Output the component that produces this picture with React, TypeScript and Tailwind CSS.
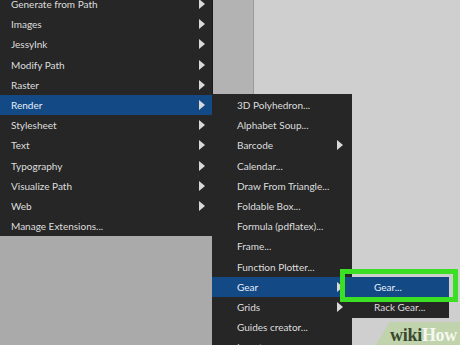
const mainItems = [
  { label: "Generate from Path", sub: true },
  { label: "Images", sub: true },
  { label: "JessyInk", sub: true },
  { label: "Modify Path", sub: true },
  { label: "Raster", sub: true },
  { label: "Render", sub: true, active: true },
  { label: "Stylesheet", sub: true },
  { label: "Text", sub: true },
  { label: "Typography", sub: true },
  { label: "Visualize Path", sub: true },
  { label: "Web", sub: true },
  { label: "Manage Extensions...", sub: false },
];

const renderItems = [
  { label: "3D Polyhedron..." },
  { label: "Alphabet Soup..." },
  { label: "Barcode", sub: true },
  { label: "Calendar..." },
  { label: "Draw From Triangle..." },
  { label: "Foldable Box..." },
  { label: "Formula (pdflatex)..." },
  { label: "Frame..." },
  { label: "Function Plotter..." },
  { label: "Gear", sub: true, active: true },
  { label: "Grids", sub: true },
  { label: "Guides creator..." },
  { label: "L-system..." },
];

function Arrow() {
  return (
    <svg width="6" height="10" viewBox="0 0 6 10" className="shrink-0">
      <path d="M0 0 L6 5 L0 10 Z" fill="#d9d9d9" />
    </svg>
  );
}

type Item = { label: string; sub?: boolean; active?: boolean };

function MenuRow({ item, pl, pr }: { item: Item; pl: string; pr: string }) {
  return (
    <div
      className={`flex h-[20.2px] items-center justify-between ${pl} ${pr} ${
        item.active ? "bg-[#134a86] text-[#e6eefa]" : "text-[#dedede]"
      }`}
    >
      <span className="whitespace-nowrap">{item.label}</span>
      {item.sub && <Arrow />}
    </div>
  );
}

export default function App() {
  return (
    <div
      className="relative h-[345px] w-[460px] overflow-hidden text-[10px] leading-none"
      style={{ fontFamily: 'Lato, "Open Sans", sans-serif' }}
    >
      {/* canvas behind the menus */}
      <div className="flex h-full">
        <div className="w-[213px] bg-[#aaaaaa]" />
        <div className="w-[41px] border-r border-[#9a9a9a] bg-[#b3b3b3]" />
        <div className="flex-1 bg-[#cfcfcf]" />
      </div>

      {/* Extensions menu */}
      <div className="absolute left-0 top-[-6px] w-[213px] border-r border-[#1a1a1a] bg-[#262626]">
        {mainItems.map((it) => (
          <MenuRow key={it.label} item={it} pl="pl-[11px]" pr="pr-[7px]" />
        ))}
      </div>

      {/* Render submenu */}
      <div className="absolute left-[212px] top-[94px] w-[140px] bg-[#262626] pt-[1px]">
        {renderItems.map((it) => (
          <MenuRow key={it.label} item={it} pl="pl-[25px]" pr="pr-[9px]" />
        ))}
      </div>

      {/* Gear submenu */}
      <div className="absolute left-[348px] top-[277px] w-[101px] bg-[#262626] pb-[1px]">
        <MenuRow item={{ label: "Gear...", active: true }} pl="pl-[26px]" pr="pr-2" />
        <MenuRow item={{ label: "Rack Gear..." }} pl="pl-[26px]" pr="pr-2" />
      </div>

      {/* highlight box */}
      <div className="absolute left-[340px] top-[269px] h-[33px] w-[118px] border-[5px] border-[#3be024]" />

      {/* watermark */}
      <div className="absolute bottom-0 right-0 flex h-[23px] w-[84px] items-center justify-end pr-[3px] pt-[2px] [clip-path:polygon(16%_0,100%_0,100%_100%,0_100%)] bg-[#bcd3a2]/80">
        <span
          className="text-[18px] font-bold tracking-[-0.3px]"
          style={{ fontFamily: '"Liberation Serif", serif' }}
        >
          <span className="text-[#39472e]">wiki</span>
          <span className="text-[#f4f8ef]">How</span>
        </span>
      </div>
    </div>
  );
}
